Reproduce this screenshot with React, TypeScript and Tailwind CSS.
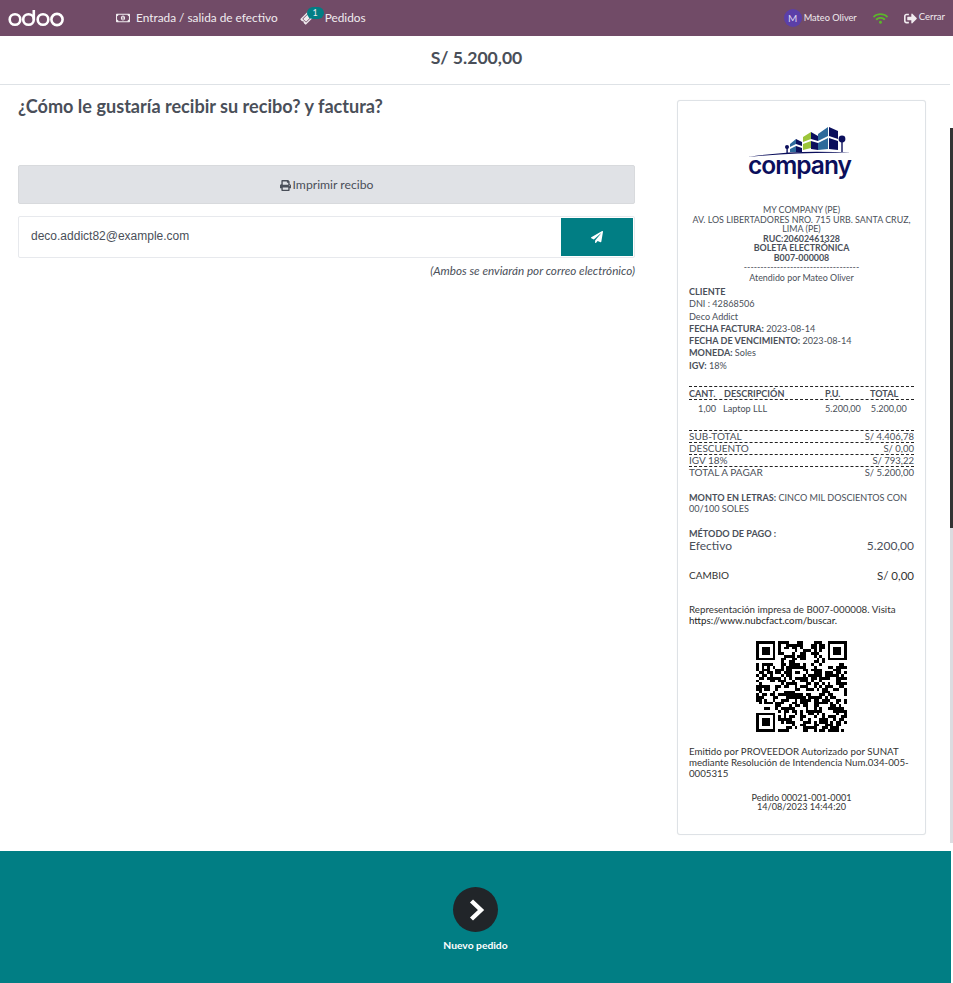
import React from 'react'
import { FaPaperPlane, FaPrint, FaRegMoneyBillAlt, FaSignOutAlt, FaTicketAlt, FaWifi } from 'react-icons/fa'

// seeded pattern for the receipt QR code
function qrCells() {
  const n = 33
  const cells: [number, number][] = []
  let seed = 20602
  const inFinder = (x: number, y: number, ox: number, oy: number) =>
    x >= ox - 1 && x <= ox + 7 && y >= oy - 1 && y <= oy + 7
  for (let y = 0; y < n; y++) {
    for (let x = 0; x < n; x++) {
      seed = (seed * 1103515245 + 12345) & 0x7fffffff
      if (inFinder(x, y, 0, 0) || inFinder(x, y, 26, 0) || inFinder(x, y, 0, 26)) continue
      if ((seed >> 16) % 100 < 52) cells.push([x, y])
    }
  }
  return cells
}

function Finder({ x, y }: { x: number; y: number }) {
  return (
    <g>
      <rect x={x} y={y} width="7" height="7" fill="#000" />
      <rect x={x + 1} y={y + 1} width="5" height="5" fill="#fff" />
      <rect x={x + 2} y={y + 2} width="3" height="3" fill="#000" />
    </g>
  )
}

function QrCode() {
  return (
    <svg width="91" height="91" viewBox="0 0 33 33" shapeRendering="crispEdges">
      {qrCells().map(([x, y]) => (
        <rect key={`${x}-${y}`} x={x} y={y} width="1" height="1" fill="#000" />
      ))}
      <Finder x={0} y={0} />
      <Finder x={26} y={0} />
      <Finder x={0} y={26} />
    </svg>
  )
}

function OdooLogo() {
  return (
    <svg width="58" height="18" viewBox="0 0 58 18" fill="none" stroke="#fff" strokeWidth="2.6">
      <circle cx="7" cy="10.5" r="5.3" />
      <circle cx="20.5" cy="10.5" r="5.3" />
      <path d="M25.8 1 V10.5" />
      <circle cx="35" cy="10.5" r="5.3" />
      <circle cx="49" cy="10.5" r="5.6" />
    </svg>
  )
}

function CompanyLogo() {
  const navy = '#0b0f5c'
  const blue = '#2e6a9b'
  return (
    <div className="flex w-[104px] flex-col items-center">
      <svg width="104" height="32" viewBox="0 0 104 32" className="-mb-[6px]">
        <path d="M0 31 Q50 23 104 27 Q50 26 0 31Z" fill={navy} />
        <rect x="38.4" y="21" width="1.4" height="6" fill={navy} />
        <circle cx="39" cy="21" r="2" fill={navy} />
        <path d="M42 18 L48 13 L48 18 L42 21Z M42 23 L48 20 L48 26 L42 26Z" fill={blue} />
        <path d="M48 13 L54 16 L54 20 L48 18Z M48 20 L54 22 L54 26 L48 26Z" fill={navy} />
        <path d="M55 11 L63 6 L63 13 L55 16Z M55 18 L63 15 L63 22 L55 24Z" fill="#9cc53a" />
        <path d="M63 6 L70 10 L70 15 L63 13Z M63 15 L70 17 L70 24 L63 23Z" fill={navy} />
        <path d="M70 8 L80 1 L80 10 L70 15Z M70 17 L80 12 L80 23 L70 24Z" fill={blue} />
        <path d="M81 1 L90 5 L90 13 L81 10Z M81 12 L90 15 L90 24 L81 23Z" fill={navy} />
        <circle cx="94" cy="13" r="3.4" fill={navy} />
        <rect x="93.3" y="15" width="1.4" height="11" fill={navy} />
      </svg>
      <div className="font-['Inter',sans-serif] text-[24.5px] font-semibold leading-[26px] tracking-[-1px] text-[#0b0f5c]">
        company
      </div>
    </div>
  )
}

function Row({ label, value }: { label: string; value: string }) {
  return (
    <div className="flex h-[12px] items-center justify-between border-t border-dashed border-[#222] text-[10px] leading-[11px]">
      <span>{label}</span>
      <span className="text-[9.5px]">{value}</span>
    </div>
  )
}

export default function App() {
  return (
    <div className="relative flex h-[983px] w-[953px] flex-col overflow-hidden bg-white font-['Lato',sans-serif] text-[#4a4f59]">
      {/* top bar */}
      <header className="flex h-9 shrink-0 items-center bg-[#714b67] text-white">
        <div className="ml-2 mr-[50px]">
          <OdooLogo />
        </div>
        <div className="flex items-center gap-[6px] text-[11.85px] text-[#f0ebef]">
          <FaRegMoneyBillAlt className="text-[14px]" />
          <span>Entrada / salida de efectivo</span>
        </div>
        <div className="relative ml-[23px] flex items-center gap-[12px] text-[11.85px] text-[#f0ebef]">
          <FaTicketAlt className="-rotate-45 text-[12px]" />
          <span className="absolute -top-[2px] left-[6px] flex h-[12px] w-[17px] items-center justify-center rounded-full bg-[#017e84] text-[9px]">
            1
          </span>
          <span>Pedidos</span>
        </div>
        <div className="ml-auto flex items-center pr-[8px] text-[9.2px] text-[#f0ebef]">
          <div className="flex h-[18px] w-[18px] items-center justify-center rounded-full bg-[#5b3fa8] text-[10px] text-[#dcd6f0]">
            M
          </div>
          <span className="ml-[2px]">Mateo Oliver</span>
          <FaWifi className="ml-4 text-[15px] text-[#5cb82a]" />
          <FaSignOutAlt className="ml-[16px] text-[13px]" />
          <span className="ml-[2px] -translate-y-px text-[9.5px]">Cerrar</span>
        </div>
      </header>

      {/* total */}
      <div className="mr-[3px] flex h-[49px] shrink-0 items-center justify-center border-b border-[#dee2e6] pb-[3px] pl-[3px] text-[17.6px] font-bold">
        S/ 5.200,00
      </div>

      {/* content */}
      <main className="flex flex-1 pl-[18px] pr-[27px]">
        <section className="w-[617px] shrink-0">
          <h1 className="mt-[10px] text-[18.1px] font-bold leading-[22px]">¿Cómo le gustaría recibir su recibo? y factura?</h1>
          <button className="mt-[48px] flex h-[39px] w-full items-center justify-center gap-[2px] rounded-[2px] border border-[#d8dadd] bg-[#e0e2e6] pt-[1px] text-[12.2px]">
            <FaPrint className="text-[11px]" />
            Imprimir recibo
          </button>
          <div className="mt-3 flex h-[42px] items-center justify-between rounded-[2px] border border-[#e7e9ed] pl-3 pr-[1px]">
            <span className="-translate-y-px font-['Liberation_Sans',sans-serif] text-[12px]">deco.addict82@example.com</span>
            <div className="flex h-[38px] w-[72px] items-center justify-center bg-[#017e84] text-white">
              <FaPaperPlane className="text-[12px]" />
            </div>
          </div>
          <p className="mt-[4px] text-right text-[11.7px] italic">(Ambos se enviarán por correo electrónico)</p>
        </section>

        {/* receipt */}
        <aside className="ml-[42px] mt-[15px] h-[735px] w-[249px] rounded-[3px] border border-[#dee2e6] bg-white px-[11px] text-[9.1px] leading-[11px] text-[#4a4f59] shadow-[0_0_1px_rgba(0,0,0,0.1)]">
          <div className="mt-[25px] flex justify-center pr-[4px]">
            <CompanyLogo />
          </div>
          <div className="mt-[27px] text-center text-[8.9px] leading-[9.5px]">
            <div>MY COMPANY (PE)</div>
            <div className="-mx-1">AV. LOS LIBERTADORES NRO. 715 URB. SANTA CRUZ,</div>
            <div>LIMA (PE)</div>
            <div className="font-bold">RUC:20602461328</div>
            <div className="font-bold">BOLETA ELECTRÓNICA</div>
            <div className="font-bold">B007-000008</div>
            <div className="overflow-hidden">-----------------------------------</div>
            <div className="mt-[1px]">Atendido por Mateo Oliver</div>
          </div>
          <div className="mt-[4px] leading-[12.3px]">
            <div className="font-bold">CLIENTE</div>
            <div>DNI : 42868506</div>
            <div>Deco Addict</div>
            <div>
              <b>FECHA FACTURA:</b> 2023-08-14
            </div>
            <div>
              <b>FECHA DE VENCIMIENTO:</b> 2023-08-14
            </div>
            <div>
              <b>MONEDA:</b> Soles
            </div>
            <div>
              <b>IGV:</b> 18%
            </div>
          </div>

          <div className="mt-[14px] flex h-[14px] items-center border-y border-dashed border-[#222] font-bold">
            <span className="w-[35px]">CANT.</span>
            <span className="w-[101px]">DESCRIPCIÓN</span>
            <span className="w-[45px]">P.U.</span>
            <span>TOTAL</span>
          </div>
          <div className="flex h-[16px] items-center">
            <span className="w-[27px] text-right">1,00</span>
            <span className="ml-[7px] w-[102px]">Laptop LLL</span>
            <span>5.200,00</span>
            <span className="ml-[10px]">5.200,00</span>
          </div>

          <div className="mt-[14px]">
            <Row label="SUB-TOTAL" value="S/ 4.406,78" />
            <Row label="DESCUENTO" value="S/ 0,00" />
            <Row label="IGV 18%" value="S/ 793,22" />
            <Row label="TOTAL A PAGAR" value="S/ 5.200,00" />
          </div>

          <div className="mt-[14px]">
            <b>MONTO EN LETRAS:</b> CINCO MIL DOSCIENTOS CON 00/100 SOLES
          </div>
          <div className="mt-[14px] font-bold">MÉTODO DE PAGO :</div>
          <div className="flex justify-between text-[12px] leading-[13px]">
            <span>Efectivo</span>
            <span>5.200,00</span>
          </div>
          <div className="mt-[18px] flex justify-between text-[10px] text-[#333]">
            <span>CAMBIO</span>
            <span className="text-[11.5px]">S/ 0,00</span>
          </div>
          <div className="mt-[23px] text-[9.75px] text-[#333]">
            Representación impresa de B007-000008. Visita <span className="text-[#222]">https://www.nubcfact.com/buscar.</span>
          </div>
          <div className="mt-[15px] flex justify-center">
            <QrCode />
          </div>
          <div className="mt-[14px] text-[9.7px] text-[#333]">
            Emitido por PROVEEDOR Autorizado por SUNAT mediante Resolución de Intendencia Num.034-005-0005315
          </div>
          <div className="mt-[14px] text-center text-[9.1px] leading-[9px] text-[#333]">
            <div>Pedido 00021-001-0001</div>
            <div>14/08/2023 14:44:20</div>
          </div>
        </aside>
      </main>

      {/* scrollbar track and thumb */}
      <div className="absolute right-0 top-[128px] h-[715px] w-[3px] bg-[#dcdce0]">
        <div className="h-[400px] bg-[#333]" />
      </div>

      {/* footer */}
      <footer className="mr-[2px] flex h-[132px] shrink-0 flex-col items-center bg-[#017e84] pt-[36px] text-white">
        <div className="flex h-[45px] w-[45px] items-center justify-center rounded-full bg-[#212529]">
          <svg width="18" height="22" viewBox="0 0 18 22" fill="none" stroke="#fff" strokeWidth="4.4">
            <path d="M4.5 2 L14 11 L4.5 20" />
          </svg>
        </div>
        <div className="mt-[6px] text-[10.3px] font-bold">Nuevo pedido</div>
      </footer>
    </div>
  )
}
